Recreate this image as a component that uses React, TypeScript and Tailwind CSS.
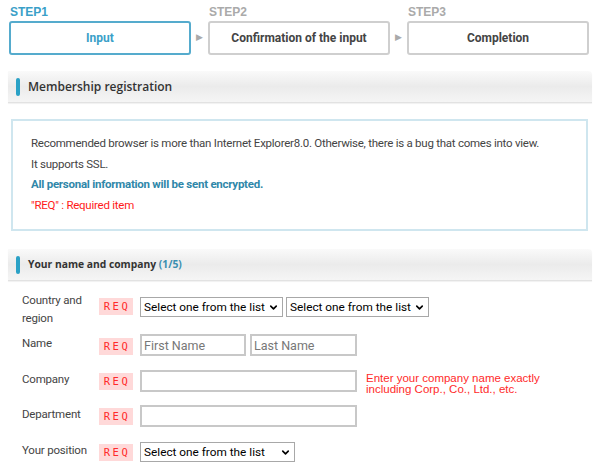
import React from "react";
import { ChevronDown } from "lucide-react";

function Req() {
  return (
    <span className="inline-flex h-[17px] w-[34px] shrink-0 items-center justify-center bg-[#ffd9d9] pl-[2px] font-['DejaVu_Sans_Mono',monospace] text-[10.5px] tracking-[2.5px] text-[#ff2a2a]">
      REQ
    </span>
  );
}

function Select({ className }: { className: string }) {
  return (
    <div className={`relative h-[20px] ${className}`}>
      <select
        className="h-full w-full appearance-none border border-[#a8a8a8] bg-white pl-[3px] font-['Roboto',Arial,sans-serif] text-[11.8px] leading-[18px] text-black outline-none"
        defaultValue=""
      >
        <option value="">Select one from the list</option>
      </select>
      <ChevronDown size={11} strokeWidth={3.5} className="pointer-events-none absolute right-[4px] top-[5px] text-black" />
    </div>
  );
}

function TextInput({ placeholder, className }: { placeholder?: string; className: string }) {
  return (
    <input
      placeholder={placeholder}
      className={`h-[22px] border-2 border-[#c8c8c8] bg-white px-[2px] font-['Roboto',Arial,sans-serif] text-[12.5px] text-black outline-none placeholder:text-[#777] ${className}`}
    />
  );
}

function SectionHeader({ children }: { children: React.ReactNode }) {
  return (
    <div className="flex h-[32px] items-center rounded-tr-[4px] border-b border-[#e2e2e2] bg-gradient-to-b from-[#fafafa] via-[#ebebeb] to-[#f5f5f5] pl-[8px] shadow-[0_1px_1px_rgba(0,0,0,0.06)]">
      <span className="mr-[8px] h-[18px] w-[4px] rounded-[2px] bg-[#2aa1c6]" />
      {children}
    </div>
  );
}

function Row({
  label,
  children,
  className,
  reqTop = "mt-[3px]",
}: {
  label: React.ReactNode;
  children: React.ReactNode;
  className: string;
  reqTop?: string;
}) {
  return (
    <div className={`flex items-start ${className}`}>
      <div className="w-[91px] shrink-0 whitespace-nowrap pl-[14px] text-[11.5px] leading-[18px] tracking-[-0.2px] text-[#444]">
        {label}
      </div>
      <div className={`shrink-0 ${reqTop}`}>
        <Req />
      </div>
      <div className="ml-[7px] flex items-start gap-[3px]">{children}</div>
    </div>
  );
}

export default function App() {
  const steps = [
    { n: "STEP1", label: "Input", active: true },
    { n: "STEP2", label: "Confirmation of the input", active: false },
    { n: "STEP3", label: "Completion", active: false },
  ];

  return (
    <div className="h-[468px] w-[600px] overflow-hidden bg-white font-['Roboto',Arial,sans-serif] text-[12px] text-[#333]">
      {/* Steps */}
      <div className="flex items-end px-[9px] pt-[5px]">
        {steps.map((s, i) => (
          <React.Fragment key={s.n}>
            {i > 0 && (
              <div className="flex h-[34px] w-[17px] items-center justify-center text-[9px] text-[#aaa]">▶</div>
            )}
            <div className="w-[182px]">
              <div className={`mb-[1px] pl-[1px] font-['Liberation_Sans',Arial,sans-serif] text-[12px] font-bold leading-[15px] ${s.active ? "text-[#3aa0c8]" : "text-[#aaa]"}`}>
                {s.n}
              </div>
              <div
                className={`flex h-[34px] items-center justify-center rounded-[3px] border-2 text-[12px] font-bold ${
                  s.active ? "border-[#55abcd] text-[#3aa0c8]" : "border-[#cfcfcf] text-[#444]"
                }`}
              >
                {s.label}
              </div>
            </div>
          </React.Fragment>
        ))}
      </div>

      <div className="mt-[16px] px-[8px]">
        <SectionHeader>
          <span className="font-['Open_Sans',sans-serif] text-[12px] font-semibold text-[#333]">Membership registration</span>
        </SectionHeader>

        {/* Notice */}
        <div className="mx-[3px] mt-[16px] h-[112px] w-[577px] border-2 border-[#cfe6ef] px-[18px] pt-[12px] text-[11.5px] leading-[20.5px] tracking-[-0.25px] text-[#444]">
          <p>Recommended browser is more than Internet Explorer8.0. Otherwise, there is a bug that comes into view.</p>
          <p>It supports SSL.</p>
          <p className="font-bold text-[#2f87a9]">All personal information will be sent encrypted.</p>
          <p className="text-[#ff1a1a]">"REQ" : Required item</p>
        </div>

        <div className="mt-[18px]">
          <SectionHeader>
            <span className="font-['Open_Sans',sans-serif] text-[10.3px] font-bold text-[#333]">
              Your name and company <span className="text-[#3a8fb0]">(1/5)</span>
            </span>
          </SectionHeader>
        </div>

        <div className="pt-[10px]">
          <Row label={<>Country and<br />region</>} className="h-[43px]" reqTop="mt-[6px]">
            <div className="mt-[6px] flex gap-[3px]">
              <Select className="w-[143px]" />
              <Select className="w-[143px]" />
            </div>
          </Row>
          <Row label="Name" className="h-[36px]">
            <TextInput placeholder="First Name" className="w-[106px]" />
            <TextInput placeholder="Last Name" className="ml-[1px] w-[107px]" />
          </Row>
          <Row label="Company" className="h-[35px]" reqTop="mt-[2px]">
            <TextInput className="w-[217px]" />
            <div className="ml-[6px] mt-[3px] font-['Liberation_Sans',Arial,sans-serif] text-[11.5px] leading-[10.5px] text-[#ff2a2a]">
              Enter your company name exactly
              <br />
              including Corp., Co., Ltd., etc.
            </div>
          </Row>
          <Row label="Department" className="h-[36px]" reqTop="mt-[2px]">
            <TextInput className="w-[217px]" />
          </Row>
          <Row label="Your position" className="h-[27px]" reqTop="mt-[2px]">
            <div className="mt-[1px]">
              <Select className="w-[155px]" />
            </div>
          </Row>
        </div>
      </div>
    </div>
  );
}
